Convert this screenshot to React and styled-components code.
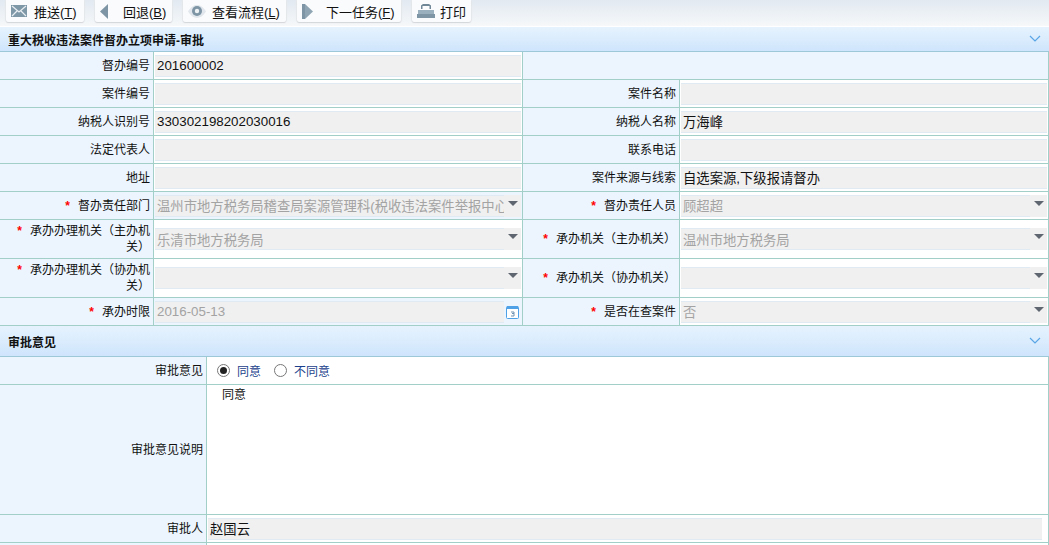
import React from 'react'
import styled, {createGlobalStyle} from 'styled-components'

const GlobalStyle = createGlobalStyle`
    html, body {
        margin: 0;
        padding: 0;
        height: 100%;
        overflow: hidden;
        background: #fff;
    }
    body {
        font-family: "Liberation Sans", "Noto Sans CJK SC", sans-serif;
        font-size: 12px;
        color: #111;
    }
`;

const Page = styled.div`
    width: 1049px;
    height: 545px;
    overflow: hidden;
`;

const Toolbar = styled.div`
    height: 27px;
    box-sizing: border-box;
    display: flex;
    align-items: flex-start;
    gap: 11px;
    padding-left: 6px;
    background: linear-gradient(#e2e9f1, #f6f8f9);
    border-bottom: 1px solid #fff;
`;

const ToolButton = styled.div`
    width: ${p => p.$width}px;
    height: 22px;
    box-sizing: border-box;
    display: flex;
    align-items: center;
    gap: ${p => p.$gap}px;
    padding-left: 5px;
    background: #fafbfc;
    border-radius: 0 0 2px 2px;
    box-shadow: 0 1px 1px #d3d6da, 1px 0 1px #e6e9ec, -1px 0 1px #e6e9ec;
    font-size: 13px;
    white-space: nowrap;
    u { text-decoration: underline; }
    svg { flex: none; }
`;

const SectionHeader = styled.div`
    height: ${p => p.$height}px;
    box-sizing: border-box;
    display: flex;
    align-items: center;
    justify-content: space-between;
    padding: 0 8px;
    background: linear-gradient(#e6f3fe, #cfe5fc);
    border-bottom: 1px solid #9cc8d8;
    font-size: 12px;
    font-weight: bold;
    color: #111;
`;

const Grid = styled.table`
    width: 1049px;
    table-layout: fixed;
    border-collapse: separate;
    border-spacing: 0;
    border-right: 1px solid #a3cfc9;
`;

const Row = styled.tr`
    height: ${p => p.$height}px;
`;

const Label = styled.td`
    box-sizing: border-box;
    height: inherit;
    padding: 0 3px 0 8px;
    background: #ecf5fd;
    border-right: 1px solid #a3cfc9;
    border-bottom: 1px solid #a3cfc9;
    text-align: right;
    font-size: 12px;
    line-height: 16px;
    color: #111;
`;

const Value = styled.td`
    box-sizing: border-box;
    padding: 0 1px 0 1px;
    background: ${p => (p.$tint ? '#ecf5fd' : '#fff')};
    border-right: 1px solid #a3cfc9;
    border-bottom: 1px solid #a3cfc9;
    vertical-align: ${p => (p.$top ? 'top' : 'middle')};
    &:last-child { border-right: 0; }
`;

const Star = styled.span`
    color: #f00;
    font-weight: bold;
    margin-right: 8px;
`;

const Field = styled.div`
    height: 22px;
    box-sizing: border-box;
    display: flex;
    align-items: center;
    padding-left: 2px;
    background: #f0f0f0;
    border: 1px solid #dfeaf2;
    border-width: 1px 0 1px 0;
    margin-right: ${p => p.$inset || 0}px;
    font-size: 13.33px;
    white-space: nowrap;
    overflow: hidden;
    color: ${p => (p.$muted ? '#a3a3a3' : '#111')};
    letter-spacing: ${p => p.$spaced || 0}px;
`;

const PickerWrap = styled.div`
    display: flex;
    align-items: flex-start;
    width: 100%;
    background: ${p => (p.$plain ? 'transparent' : 'none')};
`;

const PickerField = styled(Field)`
    flex: 1;
    min-width: 0;
    margin-right: 0;
`;

const Arrow = styled.div`
    flex: none;
    width: ${p => p.$width}px;
    height: 22px;
    background: #f0f0f0;
    position: relative;
    &::after {
        content: '';
        display: block;
        margin: 6px auto 0;
        width: 0;
        height: 0;
        border-left: 5px solid transparent;
        border-right: 5px solid transparent;
        border-top: 5px solid #5f6670;
    }
`;

const DateIcon = styled.div`
    flex: none;
    width: 17px;
    height: 22px;
    display: flex;
    align-items: center;
    justify-content: center;
`;

const RadioGroup = styled.div`
    display: flex;
    align-items: center;
    padding-left: 9px;
    font-size: 12px;
    color: #1a3f8c;
`;

const RadioDot = styled.span`
    display: inline-flex;
    align-items: center;
    justify-content: center;
    width: 13px;
    height: 13px;
    box-sizing: border-box;
    border: 1px solid #777;
    border-radius: 50%;
    background: #fff;
    margin-right: ${p => p.$gap}px;
    &::after {
        content: '';
        display: ${p => (p.$on ? 'block' : 'none')};
        width: 7px;
        height: 7px;
        border-radius: 50%;
        background: #222;
    }
`;

const RadioText = styled.span`
    margin-right: 13px;
`;

const NoteText = styled.div`
    height: 127px;
    padding: 2px 0 0 14px;
    font-size: 12px;
    line-height: 16px;
    color: #111;
`;

const Chevron = () => (
    <svg width="12" height="8" viewBox="0 0 12 8">
        <path d="M1 1l5 5 5-5" fill="none" stroke="#5aa5e6" strokeWidth="1.2"/>
    </svg>
);

const MailIcon = () => (
    <svg width="16" height="13" viewBox="0 0 16 13">
        <rect width="16" height="12" y="0" fill="#7f98a8"/>
        <path d="M1 1l7 6 7-6M1 11l5-5M15 11l-5-5" fill="none" stroke="#e9eef2" strokeWidth="1.2"/>
    </svg>
);

const BackIcon = () => (
    <svg width="9" height="15" viewBox="0 0 9 15">
        <path d="M8 0v15L0 7.5z" fill="#7d95a5"/>
    </svg>
);

const EyeIcon = () => (
    <svg width="18" height="13" viewBox="0 0 18 13">
        <path d="M0 6.500C3 1.500 6 0 9 0s6 1.500 9 6.500C15 11 12 13 9 13S3 11 0 6.500z" fill="#e1e7ec"/>
        <circle cx="9" cy="6" r="5" fill="#7d95a5"/>
        <circle cx="9" cy="6" r="2.200" fill="#eef2f5"/>
    </svg>
);

const NextIcon = () => (
    <svg width="11" height="15" viewBox="0 0 11 15">
        <path d="M0 0h3v15H0z" fill="#7d95a5"/>
        <path d="M3 0l8 7.500L3 15z" fill="#8fa5b3"/>
    </svg>
);

const PrintIcon = () => (
    <svg width="18" height="16" viewBox="0 0 18 16">
        <path d="M4 6V2.500L6 1h6l2 1.500V6h-1.500V3h-7v3z" fill="#6f8796"/>
        <path d="M1 7h16v4H1z" fill="#9bb0be"/>
        <path d="M0 11h18v4H0z" fill="#7d95a5"/>
    </svg>
);

const CalendarIcon = () => (
    <svg width="13" height="14" viewBox="0 0 13 14">
        <rect x="0.500" y="1.500" width="12" height="12" rx="1" fill="#fff" stroke="#4ea1e6"/>
        <rect x="1" y="1" width="11" height="3" fill="#4ea1e6"/>
        <path d="M5 7h3v1.500H6M8 8.500V11H5" fill="none" stroke="#6f93b3" strokeWidth="1"/>
    </svg>
);

const Picker = ({text, muted, arrowWidth = 17, spaced, inset}) => (
    <PickerWrap>
        <PickerField $muted={muted} $spaced={spaced}>{text}</PickerField>
        <Arrow $width={arrowWidth}/>
    </PickerWrap>
);

const App = () => (
    <Page>
        <GlobalStyle/>
        <Toolbar>
            <ToolButton $width={78} $gap={7}><MailIcon/><span>推送(<u>T</u>)</span></ToolButton>
            <ToolButton $width={77} $gap={14}><BackIcon/><span>回退(<u>B</u>)</span></ToolButton>
            <ToolButton $width={103} $gap={6}><EyeIcon/><span>查看流程(<u>L</u>)</span></ToolButton>
            <ToolButton $width={104} $gap={13}><NextIcon/><span>下一任务(<u>F</u>)</span></ToolButton>
            <ToolButton $width={59} $gap={5}><PrintIcon/><span>打印</span></ToolButton>
        </Toolbar>
        <SectionHeader $height={25}>
            <span>重大税收违法案件督办立项申请-审批</span>
            <Chevron/>
        </SectionHeader>
        <Grid>
            <colgroup>
                <col style={{width: 154}}/>
                <col style={{width: 369}}/>
                <col style={{width: 157}}/>
                <col/>
            </colgroup>
            <tbody>
                <Row $height={28}>
                    <Label>督办编号</Label>
                    <Value><Field>201600002</Field></Value>
                    <Value $tint colSpan={2}/>
                </Row>
                <Row $height={28}>
                    <Label>案件编号</Label>
                    <Value><Field/></Value>
                    <Label>案件名称</Label>
                    <Value><Field/></Value>
                </Row>
                <Row $height={28}>
                    <Label>纳税人识别号</Label>
                    <Value><Field>330302198202030016</Field></Value>
                    <Label>纳税人名称</Label>
                    <Value><Field>万海峰</Field></Value>
                </Row>
                <Row $height={28}>
                    <Label>法定代表人</Label>
                    <Value><Field/></Value>
                    <Label>联系电话</Label>
                    <Value><Field/></Value>
                </Row>
                <Row $height={28}>
                    <Label>地址</Label>
                    <Value><Field/></Value>
                    <Label>案件来源与线索</Label>
                    <Value><Field>自选案源,下级报请督办</Field></Value>
                </Row>
                <Row $height={28}>
                    <Label><Star>*</Star>督办责任部门</Label>
                    <Value $tint><Picker muted text="温州市地方税务局稽查局案源管理科(税收违法案件举报中心)"/></Value>
                    <Label><Star>*</Star>督办责任人员</Label>
                    <Value><Picker muted text="顾超超" arrowWidth={17}/></Value>
                </Row>
                <Row $height={39}>
                    <Label><Star>*</Star>承办办理机关（主办机关）</Label>
                    <Value><Picker muted text="乐清市地方税务局"/></Value>
                    <Label><Star>*</Star>承办机关（主办机关）</Label>
                    <Value><Picker muted text="温州市地方税务局"/></Value>
                </Row>
                <Row $height={39}>
                    <Label><Star>*</Star>承办办理机关（协办机关）</Label>
                    <Value><Picker/></Value>
                    <Label><Star>*</Star>承办机关（协办机关）</Label>
                    <Value><Picker/></Value>
                </Row>
                <Row $height={28}>
                    <Label><Star>*</Star>承办时限</Label>
                    <Value $tint>
                        <PickerWrap>
                            <PickerField $muted>2016-05-13</PickerField>
                            <DateIcon><CalendarIcon/></DateIcon>
                        </PickerWrap>
                    </Value>
                    <Label><Star>*</Star>是否在查案件</Label>
                    <Value><Picker muted text="否"/></Value>
                </Row>
            </tbody>
        </Grid>
        <SectionHeader $height={31}>
            <span>审批意见</span>
            <Chevron/>
        </SectionHeader>
        <Grid>
            <colgroup>
                <col style={{width: 207}}/>
                <col/>
            </colgroup>
            <tbody>
                <Row $height={28}>
                    <Label>审批意见</Label>
                    <Value>
                        <RadioGroup>
                            <RadioDot $on $gap={7}/>
                            <RadioText>同意</RadioText>
                            <RadioDot $gap={7}/>
                            <RadioText>不同意</RadioText>
                        </RadioGroup>
                    </Value>
                </Row>
                <Row $height={128}>
                    <Label>审批意见说明</Label>
                    <Value $top><NoteText>同意</NoteText></Value>
                </Row>
                <Row $height={28}>
                    <Label>审批人</Label>
                    <Value><Field $inset={5}>赵国云</Field></Value>
                </Row>
                <Row $height={28}>
                    <Label/>
                    <Value/>
                </Row>
            </tbody>
        </Grid>
    </Page>
);

export default App
